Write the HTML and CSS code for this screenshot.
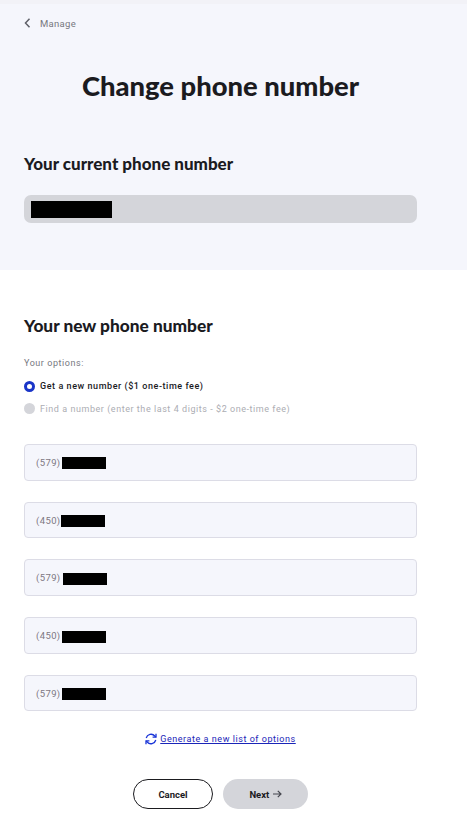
FILE: index.html
```html
<!DOCTYPE html>
<html lang="en">
  <head>
    <meta charset="UTF-8" />
    <title>Change phone number</title>
    <link rel="stylesheet" href="styles.css">
  </head>
  <body>
    <section class="current">
      <a class="back" href="#">
        <svg width="7" height="10" viewBox="0 0 7 10"><path d="M5.5 .8 1.5 5l4 4.2" fill="none" stroke="#5f6068" stroke-width="1.5"/></svg>
        <span>Manage</span>
      </a>
      <h1>Change phone number</h1>
      <h2>Your current phone number</h2>
      <div class="current-field"><span class="mask current-mask"></span></div>
    </section>

    <section class="new">
      <h2>Your new phone number</h2>
      <p class="options-label">Your options:</p>
      <div class="option">
        <span class="radio radio-on"></span>
        <span>Get a new number ($1 one-time fee)</span>
      </div>
      <div class="option option-off">
        <span class="radio"></span>
        <span>Find a number (enter the last 4 digits - $2 one-time fee)</span>
      </div>

      <div class="numbers">
        <div class="number">(579) <span class="mask mask-a"></span></div>
        <div class="number">(450)<span class="mask mask-b"></span></div>
        <div class="number">(579) <span class="mask mask-c"></span></div>
        <div class="number">(450) <span class="mask mask-a"></span></div>
        <div class="number">(579) <span class="mask mask-a"></span></div>
      </div>

      <div class="generate">
        <svg width="12" height="12" viewBox="0 0 12 12" fill="none" stroke="#1a35d8" stroke-width="1.3">
          <path d="M1.2 5A5 5 0 0 1 9.8 3l1 1"/>
          <path d="M10.8 7A5 5 0 0 1 2.2 9l-1-1"/>
          <path d="M11 .8V4.2H7.6"/>
          <path d="M1 11.2V7.8H4.4"/>
        </svg>
        <a href="#">Generate a new list of options</a>
      </div>

      <div class="botones">
        <button class="btn-cancel">Cancel</button>
        <button class="btn-next">Next
          <svg class="next-arrow" width="9" height="8" viewBox="0 0 9 8" fill="none" stroke="#45464e" stroke-width="1.2"><path d="M0 4h8M4.8 .8 8 4 4.8 7.2"/></svg>
        </button>
      </div>
    </section>
  </body>
</html>
```

FILE: styles.css
```css
body {
  font-family: Roboto, Arial, sans-serif;
  background-color: #fff;
  color: #1b1b1f;
  margin: 0;
  height: 835px;
  overflow: hidden;
}

h1,
h2 {
  font-family: Lato, "Noto Sans", sans-serif;
  font-weight: 900;
  margin: 0;
}

h1 {
  width: 393px;
  font-size: 27.4px;
  line-height: 32px;
  text-align: center;
  margin-top: 39px;
}

h2 {
  font-size: 17px;
  line-height: 22px;
}

.current {
  background-color: #f5f6fc;
  border-top: 4px solid #f2f2f7;
  box-sizing: border-box;
  height: 270px;
  padding: 11px 24px 0;
}

.current h2 {
  margin-top: 51px;
}

.back {
  display: flex;
  align-items: center;
  gap: 9px;
  height: 16px;
  font-size: 9.5px;
  letter-spacing: 0.3px;
  color: #77787f;
  text-decoration: none;
}

.current-field {
  display: flex;
  align-items: center;
  width: 393px;
  height: 28px;
  margin-top: 20px;
  padding-left: 7px;
  box-sizing: border-box;
  background-color: #d4d5da;
  border-radius: 7px;
}

.mask {
  display: inline-block;
  background-color: #000;
  vertical-align: middle;
}

.current-mask {
  width: 81px;
  height: 17px;
}

.new {
  padding: 45px 24px 0;
}

.new h2 {
  font-size: 17.3px;
}

.options-label {
  font-size: 9px;
  line-height: 14px;
  letter-spacing: 0.55px;
  color: #77787f;
  margin: 19px 0 5px;
}

.option {
  display: flex;
  align-items: center;
  gap: 5px;
  height: 22.5px;
  font-size: 9px;
  font-weight: 500;
  letter-spacing: 0.55px;
}

.option-off {
  color: #acadb3;
  font-weight: 400;
}

.radio {
  width: 11px;
  height: 11px;
  border-radius: 50%;
  background-color: #d4d5da;
}

.radio-on {
  width: 5px;
  height: 5px;
  border: 3px solid #1a35c8;
  background-color: #fff;
}

.numbers {
  display: flex;
  flex-direction: column;
  gap: 21px;
  margin-top: 24px;
}

.number {
  width: 393px;
  height: 36.7px;
  box-sizing: border-box;
  padding-left: 11px;
  line-height: 35px;
  font-size: 9.5px;
  letter-spacing: 0.4px;
  color: #7d7682;
  background-color: #f5f6fc;
  border: 1px solid #dcdce6;
  border-radius: 4px;
}

.mask-a {
  width: 44px;
  height: 12px;
  margin-left: -1px;
}

.mask-b {
  width: 44px;
  height: 12px;
}

.mask-c {
  width: 44px;
  height: 12px;
}

.generate {
  display: flex;
  justify-content: center;
  align-items: center;
  gap: 3px;
  width: 393px;
  margin-top: 22px;
  font-size: 9px;
  letter-spacing: 0.55px;
}

.generate a {
  color: #1a25b8;
}

.botones {
  display: flex;
  justify-content: center;
  gap: 10px;
  width: 393px;
  margin-top: 34px;
}

.botones button {
  height: 30px;
  font-family: Roboto, Arial, sans-serif;
  font-size: 9.5px;
  font-weight: 700;
  color: #1b1b1f;
  border-radius: 15px;
  cursor: pointer;
}

.btn-cancel {
  width: 80px;
  background-color: #fff;
  border: 1px solid #1b1b1f;
}

.btn-next {
  width: 85px;
  background-color: #d4d5da;
  border: none;
}

.next-arrow {
  margin-left: 1px;
}
```
